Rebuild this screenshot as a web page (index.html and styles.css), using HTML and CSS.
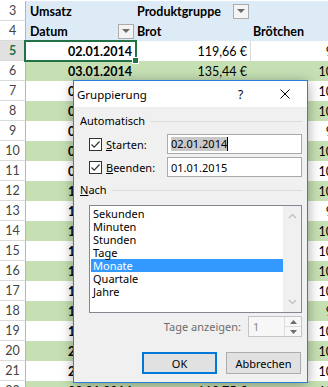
FILE: index.html
```html
<!DOCTYPE html>
<html lang="de">
<head>
<meta charset="utf-8">
<title>Gruppierung</title>
<link rel="stylesheet" href="styles.css">
</head>
<body>
<div class="sheet">
  <div class="row hdr">
    <div class="rh">3</div>
    <div class="c b lbl">Umsatz</div>
    <div class="c cc lbl2">Produktgruppe <span class="dd"></span></div>
    <div class="c d"></div>
  </div>
  <div class="row hdr">
    <div class="rh">4</div>
    <div class="c b lbl">Datum <span class="dd dd-b"></span></div>
    <div class="c cc lbl2">Brot</div>
    <div class="c d lbl3">Brötchen</div>
  </div>
  <div class="row w">
    <div class="rh act">5</div>
    <div class="c b num sel-cell">02.01.2014<span class="selbox"></span><span class="handle"></span></div>
    <div class="c cc num">119,66 €</div>
    <div class="c d num">97,80 €</div>
  </div>
  <div class="row g">
    <div class="rh">6</div>
    <div class="c b num">03.01.2014</div>
    <div class="c cc num">135,44 €</div>
    <div class="c d num">104,10 €</div>
  </div>
  <div class="row w"><div class="rh">7</div><div class="c b num">04.01.2014</div><div class="c cc num">128,30 €</div><div class="c d num">102,50 €</div></div>
  <div class="row g"><div class="rh">8</div><div class="c b num">06.01.2014</div><div class="c cc num">112,95 €</div><div class="c d num">106,20 €</div></div>
  <div class="row w"><div class="rh">9</div><div class="c b num">07.01.2014</div><div class="c cc num">121,40 €</div><div class="c d num">98,40 €</div></div>
  <div class="row g"><div class="rh">10</div><div class="c b num">08.01.2014</div><div class="c cc num">117,85 €</div><div class="c d num">103,70 €</div></div>
  <div class="row w"><div class="rh">11</div><div class="c b num">09.01.2014</div><div class="c cc num">124,10 €</div><div class="c d num">101,90 €</div></div>
  <div class="row g"><div class="rh">12</div><div class="c b num">10.01.2014</div><div class="c cc num">131,25 €</div><div class="c d num">105,60 €</div></div>
  <div class="row w"><div class="rh">13</div><div class="c b num">11.01.2014</div><div class="c cc num">140,70 €</div><div class="c d num">99,30 €</div></div>
  <div class="row g"><div class="rh">14</div><div class="c b num">13.01.2014</div><div class="c cc num">115,20 €</div><div class="c d num">107,80 €</div></div>
  <div class="row w"><div class="rh">15</div><div class="c b num">14.01.2014</div><div class="c cc num">119,05 €</div><div class="c d num">102,20 €</div></div>
  <div class="row g"><div class="rh">16</div><div class="c b num">15.01.2014</div><div class="c cc num">122,60 €</div><div class="c d num">104,90 €</div></div>
  <div class="row w"><div class="rh">17</div><div class="c b num">16.01.2014</div><div class="c cc num">126,35 €</div><div class="c d num">103,10 €</div></div>
  <div class="row g"><div class="rh">18</div><div class="c b num">17.01.2014</div><div class="c cc num">133,80 €</div><div class="c d num">96,50 €</div></div>
  <div class="row w"><div class="rh">19</div><div class="c b num">18.01.2014</div><div class="c cc num">138,15 €</div><div class="c d num">101,40 €</div></div>
  <div class="row g"><div class="rh">20</div><div class="c b num">20.01.2014</div><div class="c cc num">114,45 €</div><div class="c d num">105,20 €</div></div>
  <div class="row w"><div class="rh">21</div><div class="c b num">21.01.2014</div><div class="c cc num">120,90 €</div><div class="c d num">100,80 €</div></div>
  <div class="row g"><div class="rh">22</div><div class="c b num">22.01.2014</div><div class="c cc num">118,75 €</div><div class="c d num">103,60 €</div></div>
</div>

<div class="dlg">
  <div class="tb">
    <span class="tt">Gruppierung</span>
    <span class="tbtn">?</span>
    <span class="tbtn">
      <svg width="10" height="10" viewBox="0 0 10 10"><path d="M0.5 0.5 L9.5 9.5 M9.5 0.5 L0.5 9.5" stroke="#000" stroke-width="1" fill="none"/></svg>
    </span>
  </div>
  <div class="bd">
    <div class="grp">Automatisch</div>
    <div class="frow">
      <label class="chk">
        <span class="box"><svg width="11" height="11" viewBox="0 0 11 11"><path d="M1.5 5.5 L4.2 8.2 L9.5 2.5" stroke="#333" stroke-width="1.2" fill="none"/></svg></span>
        <span class="ak">Starten:</span>
      </label>
      <div class="inp"><span class="hl">02.01.2014</span><span class="caret"></span></div>
    </div>
    <div class="frow">
      <label class="chk">
        <span class="box"><svg width="11" height="11" viewBox="0 0 11 11"><path d="M1.5 5.5 L4.2 8.2 L9.5 2.5" stroke="#333" stroke-width="1.2" fill="none"/></svg></span>
        <span class="ak">Beenden:</span>
      </label>
      <div class="inp"><span>01.01.2015</span></div>
    </div>
    <div class="grp"><span class="ak">Nach</span></div>
    <div class="list">
      <div class="items">
        <div class="it">Sekunden</div>
        <div class="it">Minuten</div>
        <div class="it">Stunden</div>
        <div class="it">Tage</div>
        <div class="it on">Monate</div>
        <div class="it">Quartale</div>
        <div class="it">Jahre</div>
      </div>
      <div class="sb">
        <svg width="9" height="6" viewBox="0 0 9 6"><path d="M1 5 L4.5 1.5 L8 5" stroke="#c2c2c2" stroke-width="1.5" fill="none"/></svg>
        <svg width="9" height="6" viewBox="0 0 9 6"><path d="M1 1 L4.5 4.5 L8 1" stroke="#c2c2c2" stroke-width="1.5" fill="none"/></svg>
      </div>
    </div>
    <div class="days">
      <span class="dlbl">Tage anzeigen:</span>
      <div class="spin">
        <span class="sval">1</span>
        <div class="sbtns">
          <span class="sup"><svg width="7" height="4" viewBox="0 0 7 4"><path d="M0 4 L3.5 0 L7 4 Z" fill="#6d6d6d"/></svg></span>
          <span class="sdn"><svg width="7" height="4" viewBox="0 0 7 4"><path d="M0 0 L3.5 4 L7 0 Z" fill="#6d6d6d"/></svg></span>
        </div>
      </div>
    </div>
    <div class="btns">
      <button class="btn ok">OK</button>
      <button class="btn">Abbrechen</button>
    </div>
  </div>
</div>
</body>
</html>
```

FILE: styles.css
```css
html, body {
  margin: 0;
  padding: 0;
}
body {
  width: 328px;
  height: 387px;
  overflow: hidden;
  position: relative;
  background: #fff;
  font-family: Lato, "Liberation Sans", sans-serif;
  font-size: 12.5px;
  color: #000;
}

/* ---------- spreadsheet ---------- */
.sheet {
  padding-top: 1px;
}
.row {
  display: flex;
  flex: none;
  height: 20px;
}
.rh {
  flex: none;
  width: 26px;
  height: 20px;
  box-sizing: border-box;
  border-right: 1px solid #b5b5b5;
  border-bottom: 1px solid #dadada;
  text-align: center;
  line-height: 19px;
  color: #444;
  background: #fff;
}
.rh.act {
  background: #e1e1e1;
  color: #217346;
  font-weight: bold;
}
.c {
  flex: none;
  height: 20px;
  box-sizing: border-box;
  border-right: 1px solid transparent;
  display: flex;
  align-items: center;
  white-space: nowrap;
  overflow: hidden;
}
.b { width: 110px; }
.cc { width: 115px; }
.d { width: 121px; }

.hdr .c {
  background: #ddebf7;
  font-weight: bold;
}
.lbl { padding-left: 4px; justify-content: space-between; }
.lbl2 { padding-left: 1px; justify-content: space-between; }
.lbl3 { padding-left: 2px; }

.dd {
  width: 16px;
  height: 15px;
  box-sizing: border-box;
  border: 1px solid #ababab;
  background: #f4f4f4;
  margin-right: 1px;
  display: flex;
  align-items: center;
  justify-content: center;
}
.dd::after {
  content: "";
  border-left: 4px solid transparent;
  border-right: 4px solid transparent;
  border-top: 4px solid #6b6b6b;
}

.num {
  justify-content: flex-end;
  padding-right: 3px;
}
.b.num { font-weight: bold; }

.w .c { background: #fff; border-right-color: #dadada; }
.g .c { background: #c6e0b4; }

.sel-cell { position: relative; overflow: visible; }
.selbox {
  position: absolute;
  left: -2px;
  top: -1px;
  right: -2px;
  bottom: -1px;
  border: 2px solid #217346;
  pointer-events: none;
}
.handle {
  position: absolute;
  right: -4px;
  bottom: -3px;
  width: 5px;
  height: 5px;
  background: #217346;
  border: 1px solid #fff;
}

/* ---------- dialog ---------- */
.dlg {
  position: absolute;
  left: 73px;
  top: 80px;
  width: 235px;
  height: 303px;
  box-sizing: border-box;
  border: 1px solid #2b7fd6;
  background: #f0f0f0;
  box-shadow: 0 2px 12px rgba(0, 0, 0, 0.35);
  font-family: "Noto Sans", "Open Sans", sans-serif;
  font-size: 11px;
  color: #000;
  display: flex;
  flex-direction: column;
}
.tb {
  height: 26px;
  flex: none;
  background: #fff;
  display: flex;
  align-items: center;
}
.tt {
  flex: 1;
  padding-left: 3px;
  font-size: 11.5px;
}
.tbtn {
  width: 45px;
  height: 26px;
  display: flex;
  align-items: center;
  justify-content: center;
  font-size: 12px;
}
.tbtn:last-child { width: 44px; }

.bd {
  flex: 1;
  padding: 0 5px 0 6px;
  display: flex;
  flex-direction: column;
}
.ak { display: inline-block; }
.ak::first-letter { text-decoration: underline; }

.grp {
  height: 14px;
  margin-top: 7px;
  display: flex;
  align-items: center;
  line-height: 14px;
}
.grp::after {
  content: "";
  flex: 1;
  height: 1px;
  background: #dcdcdc;
  margin-left: 5px;
}
.frow {
  display: flex;
  align-items: center;
  height: 20px;
  margin-left: 9px;
  margin-top: 6px;
}
.frow + .frow { margin-top: 3px; }
.chk {
  width: 78px;
  flex: none;
  display: flex;
  align-items: center;
  gap: 4px;
}
.box {
  width: 13px;
  height: 13px;
  box-sizing: border-box;
  border: 1px solid #333;
  background: #fff;
  display: flex;
  align-items: center;
  justify-content: center;
}
.inp {
  flex: 1;
  height: 20px;
  box-sizing: border-box;
  border: 1px solid #a9a9a9;
  background: #fff;
  padding-left: 3px;
  display: flex;
  align-items: center;
}
.hl {
  background: #c8c8c8;
  line-height: 14px;
}
.caret {
  width: 1px;
  height: 14px;
  background: #000;
}
.grp + .list { margin-top: 8px; }
.frow + .grp { margin-top: 6px; }

.list {
  margin-left: 9px;
  height: 108px;
  box-sizing: border-box;
  border: 1px solid #828790;
  background: #fff;
  display: flex;
}
.items {
  flex: 1;
  padding: 1px 0 0 1px;
}
.it {
  height: 13px;
  line-height: 13px;
  padding-left: 2px;
}
.it.on {
  background: #3399ff;
  color: #fff;
}
.sb {
  width: 18px;
  flex: none;
  background: #f0f0f0;
  display: flex;
  flex-direction: column;
  align-items: center;
  justify-content: space-between;
  padding: 7px 0 7px;
  box-sizing: border-box;
}

.days {
  margin-top: 3px;
  height: 21px;
  display: flex;
  align-items: center;
  justify-content: flex-end;
}
.dlbl {
  color: #6d6d6d;
  margin-right: 7px;
}
.spin {
  width: 54px;
  height: 21px;
  box-sizing: border-box;
  border: 1px solid #c4c4c4;
  background: #f7f7f7;
  display: flex;
}
.sval {
  flex: 1;
  color: #8a8a8a;
  padding-left: 4px;
  line-height: 19px;
}
.sbtns {
  width: 16px;
  display: flex;
  flex-direction: column;
  border-left: 1px solid #dcdcdc;
}
.sup, .sdn {
  flex: 1;
  display: flex;
  align-items: center;
  justify-content: center;
}
.sup { border-bottom: 1px solid #dcdcdc; }

.btns {
  margin-top: 15px;
  margin-right: 1px;
  display: flex;
  justify-content: flex-end;
  gap: 9px;
}
.btn {
  width: 75px;
  height: 22px;
  box-sizing: border-box;
  border: 1px solid #adadad;
  background: #e1e1e1;
  font-family: "Noto Sans", "Open Sans", sans-serif;
  font-size: 11px;
  color: #000;
  padding: 0;
  margin: 0;
}
.btn.ok {
  border: 2px solid #0078d7;
}
```
